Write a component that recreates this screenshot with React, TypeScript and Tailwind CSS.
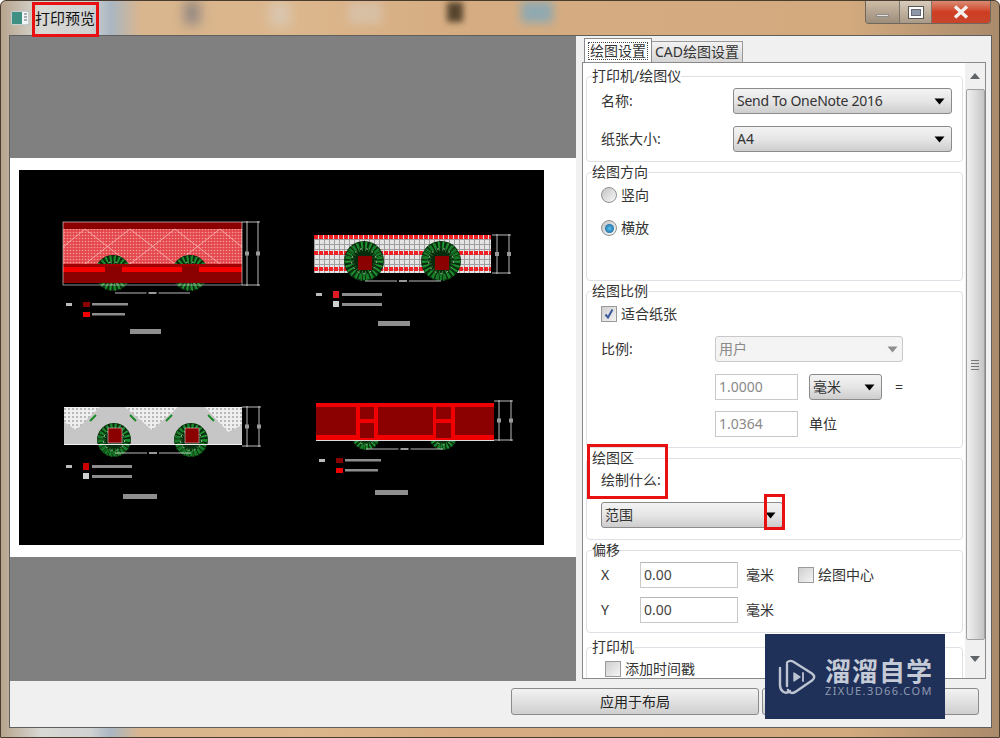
import type { ReactNode } from "react";

// 树的放射线条
function Tree({ cx, cy, r }: { cx: number; cy: number; r: number }) {
  const spokes = Array.from({ length: 22 }, (_, i) => (i / 22) * Math.PI * 2);
  return (
    <g fill="none">
      <circle cx={cx} cy={cy} r={r} fill="#0a2c0e" />
      <circle cx={cx} cy={cy} r={r * 0.8} stroke="#17802a" strokeWidth={r * 0.3} strokeDasharray="2 2" />
      <circle cx={cx} cy={cy} r={r * 0.62} strokeWidth="0.8" strokeDasharray="2 4" stroke="#dfeeda" />
      {spokes.map((a) => (
        <line
          key={a}
          x1={cx + Math.cos(a) * r * 0.5}
          y1={cy + Math.sin(a) * r * 0.5}
          x2={cx + Math.cos(a) * r}
          y2={cy + Math.sin(a) * r}
          stroke="#2aa838"
          strokeWidth="0.7"
        />
      ))}
    </g>
  );
}

function Dims({ x1, x2, y1, y2, a, b, ly }: { x1: number; x2: number; y1: number; y2: number; a: number; b: number; ly: number }) {
  const lx = (a + b) / 2;
  return (
    <g stroke="#e8e8e8" strokeWidth="0.8" fill="none">
      <path d={`M${x1} ${y1}V${y2}M${x2} ${y1}V${y2}M${x1 - 5} ${y1 + 1}H${x2 + 2}M${x1 - 5} ${y2 - 1}H${x2 + 2}`} />
      <path d={`M${a} ${ly}H${lx - 6}M${lx + 6} ${ly}H${b}`} />
      <path d={`M${lx - 4} ${ly}H${lx + 4}`} stroke="#999" strokeWidth="2" />
      <path d={`M${x1 - 2} ${(y1 + y2) / 2}h4M${x2 - 2} ${(y1 + y2) / 2}h4`} stroke="#999" strokeWidth="4" />
    </g>
  );
}

function Legend({ x, y, c1, c2, w }: { x: number; y: number; c1: string; c2: string; w: number }) {
  return (
    <g>
      <rect x={x - 17} y={y - 2} width="6" height="3" fill="#bbb" />
      <rect x={x} y={y - 3} width="7" height="5" fill={c1} />
      <rect x={x} y={y + 7} width="7" height="5" fill={c2} />
      <rect x={x + 9} y={y - 2} width={w} height="2.5" fill="#8d8d8d" />
      <rect x={x + 9} y={y + 8} width={w - 3} height="2.5" fill="#8d8d8d" />
    </g>
  );
}

function Drawing() {
  return (
    <svg viewBox="19 170 525 375" className="w-[525px] h-[375px] bg-black block blur-[0.5px]">
      <defs>
        <pattern id="pink" width="3" height="3" patternUnits="userSpaceOnUse">
          <rect width="3" height="3" fill="#e4484d" />
          <circle cx="1.5" cy="1.5" r="0.8" fill="#f59a9a" />
        </pattern>
        <pattern id="grid" width="4" height="4" patternUnits="userSpaceOnUse">
          <rect width="4" height="4" fill="#eeeeee" />
          <rect width="2" height="2" fill="#b9b9b9" />
        </pattern>
        <pattern id="redcells" width="5" height="16" patternUnits="userSpaceOnUse" x="314" y="235">
          <rect x="0" y="0" width="4" height="4" fill="#ee2026" />
        </pattern>
        <pattern id="dots" width="5" height="5" patternUnits="userSpaceOnUse">
          <rect width="5" height="5" fill="#9f9f9f" />
          <rect width="4" height="4" fill="#e4e4e4" />
        </pattern>
      </defs>

      {/* 左上 */}
      <rect x="63" y="222" width="179" height="7" fill="#8b0000" />
      <rect x="63" y="229" width="179" height="35" fill="url(#pink)" />
      <path d="M63 247L85 229L130 264M85 264L130 229L175 264M130 264L175 229L220 264M175 264L220 229L242 247" stroke="#f8b9b9" strokeWidth="0.8" fill="none" />
      <Tree cx={113} cy={273} r={18} />
      <Tree cx={190} cy={273} r={18} />
      <rect x="63" y="264" width="179" height="3" fill="#a00000" />
      <rect x="63" y="267" width="179" height="5" fill="#f50000" />
      <rect x="63" y="272" width="179" height="11" fill="#8b0000" />
      <rect x="105" y="266" width="17" height="16" fill="#8b0000" />
      <rect x="182" y="266" width="17" height="16" fill="#8b0000" />
      <rect x="63" y="222" width="179" height="63" fill="none" stroke="#eee" strokeWidth="0.6" />
      <Dims x1={247} x2={258} y1={221} y2={286} a={115} b={190} ly={293} />
      <Legend x={83} y={305} c1="#8b0000" c2="#f00000" w={36} />
      <rect x="130" y="329" width="31" height="5" fill="#8f8f8f" />

      {/* 右上 */}
      <rect x="314" y="235" width="177" height="38" fill="url(#dots)" />
      <rect x="314" y="235" width="177" height="38" fill="url(#redcells)" />
      <Tree cx={364} cy={261} r={20} />
      <Tree cx={441} cy={261} r={20} />
      <rect x="358" y="256" width="14" height="14" fill="#8b0000" />
      <rect x="435" y="256" width="14" height="14" fill="#8b0000" />
      <Dims x1={497} x2={509} y1={234} y2={274} a={365} b={441} ly={281} />
      <rect x="316" y="293" width="6" height="3" fill="#bbb" />
      <rect x="333" y="291" width="6" height="7" fill="#e01b22" />
      <rect x="333" y="301" width="6" height="6" fill="#cfcfcf" />
      <rect x="342" y="293" width="40" height="3" fill="#8d8d8d" />
      <rect x="342" y="303" width="40" height="3" fill="#8d8d8d" />
      <rect x="378" y="321" width="32" height="5" fill="#8f8f8f" />

      {/* 左下 */}
      <rect x="64" y="407" width="178" height="38" fill="#c6c6c6" />
      <path d="M64 407H100L76 430L64 422ZM125 407H178L152 430ZM205 407H242V425L228 432Z" fill="url(#grid)" />
      <Tree cx={114} cy={440} r={17} />
      <Tree cx={191} cy={440} r={17} />
      <path d="M96 415l-6 6M130 415l6 6M172 415l-6 6M208 415l6 6" stroke="#1d8a2a" strokeWidth="2" />
      <rect x="108" y="428" width="14" height="15" fill="#8b0000" stroke="#eee" strokeWidth="0.5" />
      <rect x="185" y="428" width="14" height="15" fill="#8b0000" stroke="#eee" strokeWidth="0.5" />
      <rect x="64" y="444" width="178" height="1" fill="#eee" />
      <Dims x1={247} x2={259} y1={406} y2={447} a={115} b={191} ly={453} />
      <rect x="66" y="465" width="6" height="3" fill="#bbb" />
      <rect x="83" y="463" width="6" height="7" fill="#c00" />
      <rect x="83" y="473" width="6" height="6" fill="#cfcfcf" />
      <rect x="92" y="465" width="40" height="3" fill="#8d8d8d" />
      <rect x="92" y="475" width="40" height="3" fill="#8d8d8d" />
      <rect x="123" y="494" width="34" height="5" fill="#8f8f8f" />

      {/* 右下 */}
      <Tree cx={366} cy={436} r={14} />
      <Tree cx={443} cy={436} r={14} />
      <rect x="316" y="403" width="178" height="37" fill="#f00000" />
      <rect x="316" y="407" width="40" height="28" fill="#8b0000" />
      <rect x="378" y="407" width="55" height="28" fill="#8b0000" />
      <rect x="455" y="407" width="39" height="28" fill="#8b0000" />
      <rect x="360" y="407" width="14" height="12" fill="#8b0000" />
      <rect x="360" y="423" width="14" height="15" fill="#8b0000" />
      <rect x="436" y="407" width="15" height="12" fill="#8b0000" />
      <rect x="436" y="423" width="15" height="15" fill="#8b0000" />
      <rect x="316" y="440" width="178" height="1" fill="#ddd" />
      <Dims x1={499} x2={511} y1={400} y2={441} a={366} b={443} ly={449} />
      <Legend x={336} y={461} c1="#8b0000" c2="#f00000" w={36} />
      <rect x="375" y="490" width="33" height="5" fill="#8f8f8f" />
    </svg>
  );
}

function Arrow({ muted }: { muted?: boolean }) {
  return (
    <svg width="11" height="7" viewBox="0 0 11 7" className="shrink-0">
      <path d="M0.5 0.5H10.5L5.5 6.5Z" fill={muted ? "#8e8e8e" : "#000"} />
    </svg>
  );
}

function Select({ value, className }: { value: string; className: string }) {
  return (
    <div className={`h-[26px] flex items-center justify-between pl-[3px] pr-[6px] rounded-[3px] border border-[#8b8b8b] bg-linear-to-b from-[#f3f3f3] via-[#e6e6e6] to-[#cdcdcd] text-[#333] ${className}`}>
      <span>{value}</span>
      <Arrow />
    </div>
  );
}

function Input({ value, muted }: { value: string; muted?: boolean }) {
  return (
    <div className={`h-[26px] flex items-center pl-[3px] border border-[#c9c9c9] bg-white ${muted ? "w-[83px] text-[#8a8a8a]" : "w-[98px] text-[#444] border-t-[#b5b5b5]"}`}>
      {value}
    </div>
  );
}

function Check({ checked }: { checked?: boolean }) {
  return (
    <span className="w-[16px] h-[16px] shrink-0 flex items-center justify-center border border-[#9a9a9a] bg-linear-to-br from-[#cfcfcf] to-[#f4f4f4]">
      {checked && (
        <svg width="12" height="12" viewBox="0 0 12 12">
          <path d="M2.5 6.5L5 9.5L9.5 1.5" stroke="#3a5a9c" strokeWidth="2" fill="none" />
        </svg>
      )}
    </span>
  );
}

function Radio({ checked }: { checked?: boolean }) {
  return (
    <span className="w-[16px] h-[16px] shrink-0 rounded-full flex items-center justify-center border border-[#8d9196] bg-linear-to-br from-[#c4c4c4] to-[#f8f8f8]">
      {checked && <span className="w-[9px] h-[9px] rounded-full bg-radial from-[#5cc0ee] to-[#0b5a92]" />}
    </span>
  );
}

function Group({ title, className, children }: { title: string; className: string; children: ReactNode }) {
  return (
    <fieldset className={`border border-[#dde1e5] rounded-[4px] pl-[14px] ${className}`}>
      <legend className="-ml-[9px] h-4 leading-4 text-[#333]">{title}</legend>
      {children}
    </fieldset>
  );
}

export default function App() {
  return (
    <div className="relative w-[1000px] h-[738px] overflow-hidden rounded-t-[6px] border border-[#4a3c2e] flex flex-col text-[14px] leading-4 text-[#333] font-['Noto_Sans','Noto_Sans_CJK_SC',sans-serif] bg-[linear-gradient(90deg,#b7a48c_0%,#d8d8d4_4%,#d0d2d2_9%,#a9b6c2_11%,#d9b68e_14%,#dcb68c_30%,#d6ad82_45%,#d4ab80_70%,#d2aa7e_85%,#a98a6b_100%)]">
      {/* 标题栏背景的模糊色块 */}
      <div className="absolute left-[183px] top-0 w-[16px] h-[24px] bg-[#77767f] opacity-70 blur-[6px]" />
      <div className="absolute left-[268px] top-0 w-[22px] h-[26px] bg-[#d9cdbc] opacity-70 blur-[6px]" />
      <div className="absolute left-[347px] top-[1px] w-[34px] h-[22px] bg-[#d8c6b2] opacity-70 blur-[4px]" />
      <div className="absolute left-[446px] top-[1px] w-[16px] h-[20px] bg-[#4a3a26] opacity-90 blur-[3px]" />
      <div className="absolute left-[520px] top-0 w-[32px] h-[22px] bg-[#7fa9bd] opacity-80 blur-[5px]" />

      {/* 标题栏 */}
      <div className="relative h-[34px] shrink-0 flex items-start">
        <svg width="18" height="14" viewBox="0 0 18 14" className="ml-[10px] mt-[10px] shrink-0">
          <rect width="18" height="14" fill="#f2f5f5" stroke="#9aa" />
          <rect x="1" y="1" width="10" height="12" fill="#3f8f83" />
          <path d="M13 3h3M13 6h3M13 9h3" stroke="#667" />
        </svg>
        <span className="ml-[6px] mt-[8px] text-[15px] leading-[18px] text-[#111]">打印预览</span>
        <div className="ml-auto mr-[8px] flex h-[23px] rounded-b-[4px] border border-t-0 border-[#6f675e] overflow-hidden">
          <div className="w-[33px] flex items-end justify-center pb-[6px] bg-linear-to-b from-[#cdbca6] to-[#9c8d7b]">
            <span className="w-[13px] h-[3px] bg-[#e8e2da] border border-[#8c8c8c]" />
          </div>
          <div className="w-[33px] flex items-center justify-center border-x border-[#7d746a] bg-linear-to-b from-[#d8cbb9] to-[#a99a87]">
            <span className="w-[16px] h-[13px] border border-[#555] bg-white p-[2px]">
              <span className="block w-full h-full bg-[#8d97a8] border border-[#667]" />
            </span>
          </div>
          <div className="w-[58px] flex items-center justify-center bg-linear-to-b from-[#d98a72] via-[#cf3d22] to-[#c8452b]">
            <svg width="16" height="14" viewBox="0 0 16 14">
              <path d="M2 1.5L14 12.5M14 1.5L2 12.5" stroke="#f2f0ec" strokeWidth="3.4" />
            </svg>
          </div>
        </div>
      </div>

      {/* 主体 */}
      <div className="relative flex-1 min-h-0 ml-[8px] mr-[7px] mb-[9px] border border-[#5f5f5f] bg-[#f0f0f0] flex flex-col">
        <div className="flex h-[645px] shrink-0">
          {/* 预览 */}
          <div className="w-[566px] bg-[#808080] pt-[122px]">
            <div className="h-[399px] bg-white pl-[9px] pt-[12px]">
              <Drawing />
            </div>
          </div>

          {/* 设置 */}
          <div className="ml-[6px] w-[404px] pt-[2px] flex flex-col">
            <div className="flex items-end h-[24px] pl-[2px]">
              <div className="w-[68px] h-[24px] flex items-center justify-center bg-white border border-b-0 border-[#8a8a8a]">
                <span className="border border-dotted border-[#444] px-[1px]">绘图设置</span>
              </div>
              <div className="w-[91px] h-[21px] flex items-center justify-center border border-b-0 border-l-0 border-[#9a9a9a] bg-linear-to-b from-[#f2f2f2] to-[#d5d5d5]">
                CAD绘图设置
              </div>
            </div>
            <div className="h-[617px] bg-white border border-[#8a8a8a] flex overflow-hidden">
              <div className="w-[382px] pl-[3px] pr-[2px] pt-[5px] flex flex-col gap-[2px] overflow-hidden">
                <Group title="打印机/绘图仪" className="h-[94px] shrink-0">
                  <div className="flex flex-col gap-[12px] pt-[4px]">
                    <div className="flex items-center">
                      <span className="w-[132px]">名称:</span>
                      <Select value="Send To OneNote 2016" className="w-[219px] tracking-[-0.25px]" />
                    </div>
                    <div className="flex items-center">
                      <span className="w-[132px]">纸张大小:</span>
                      <Select value="A4" className="w-[219px]" />
                    </div>
                  </div>
                </Group>

                <Group title="绘图方向" className="h-[117px] shrink-0">
                  <div className="flex flex-col gap-[17px] pt-[7px]">
                    <div className="flex items-center gap-[4px]"><Radio />竖向</div>
                    <div className="flex items-center gap-[4px]"><Radio checked />横放</div>
                  </div>
                </Group>

                <Group title="绘图比例" className="h-[165px] shrink-0">
                  <div className="pt-[7px] flex items-center gap-[4px]"><Check checked />适合纸张</div>
                  <div className="mt-[14px] flex items-center">
                    <span className="w-[114px]">比例:</span>
                    <div className="w-[188px] h-[26px] flex items-center justify-between pl-[3px] pr-[4px] rounded-[3px] border border-[#c9c9c9] bg-[#f4f4f4] text-[#8a8a8a]">
                      <span>用户</span>
                      <Arrow muted />
                    </div>
                  </div>
                  <div className="mt-[12px] ml-[114px] flex items-center">
                    <Input value="1.0000" muted />
                    <Select value="毫米" className="w-[73px] ml-[11px]" />
                    <span className="ml-[13px]">=</span>
                  </div>
                  <div className="mt-[11px] ml-[114px] flex items-center">
                    <Input value="1.0364" muted />
                    <span className="ml-[11px]">单位</span>
                  </div>
                </Group>

                <Group title="绘图区" className="h-[90px] shrink-0">
                  <div className="pt-[6px]">绘制什么:</div>
                  <Select value="范围" className="mt-[14px] w-[182px]" />
                </Group>

                <Group title="偏移" className="h-[91px] shrink-0">
                  <div className="pt-[4px] flex items-center">
                    <span className="w-[39px]">X</span>
                    <Input value="0.00" />
                    <span className="ml-[8px] w-[52px]">毫米</span>
                    <Check />
                    <span className="ml-[4px]">绘图中心</span>
                  </div>
                  <div className="mt-[9px] flex items-center">
                    <span className="w-[39px]">Y</span>
                    <Input value="0.00" />
                    <span className="ml-[8px]">毫米</span>
                  </div>
                </Group>

                <Group title="打印机" className="h-[60px] shrink-0 mt-[4px]">
                  <div className="pl-[4px] pt-[6px] flex items-center gap-[4px]"><Check />添加时间戳</div>
                </Group>
              </div>

              {/* 滚动条 */}
              <div className="w-[20px] bg-[#f0f0f0] flex flex-col items-center">
                <div className="h-[26px] flex items-center justify-center">
                  <svg width="10" height="6" viewBox="0 0 10 6"><path d="M0 6L5 0L10 6Z" fill="#5f6468" /></svg>
                </div>
                <div className="w-[19px] h-[553px] rounded-[2px] border border-[#a0a0a0] bg-linear-to-r from-[#f0f0f0] via-[#dcdcdc] to-[#c4c4c4] flex flex-col items-center justify-center gap-[2px]">
                  <span className="w-[8px] h-px bg-[#777]" />
                  <span className="w-[8px] h-px bg-[#777]" />
                  <span className="w-[8px] h-px bg-[#777]" />
                  <span className="w-[8px] h-px bg-[#777]" />
                </div>
                <div className="h-[38px] flex items-center justify-center">
                  <svg width="10" height="6" viewBox="0 0 10 6"><path d="M0 0L5 6L10 0Z" fill="#5f6468" /></svg>
                </div>
              </div>
            </div>
          </div>
        </div>

        {/* 底部按钮 */}
        <div className="flex-1 flex justify-end gap-[3px] pt-[7px] pr-[12px]">
          <button className="w-[248px] h-[27px] rounded-[3px] border border-[#8b8b8b] bg-linear-to-b from-[#f3f3f3] to-[#cfcfcf] text-[#222]">应用于布局</button>
          <div className="w-[217px] h-[27px] rounded-[3px] border border-[#8b8b8b] bg-linear-to-b from-[#f3f3f3] to-[#cfcfcf]" />
        </div>
      </div>

      {/* 红色标记 */}
      <div className="absolute left-[31px] top-[1px] w-[67px] h-[35px] border-[3px] border-[#e81010]" />
      <div className="absolute left-[586px] top-[443px] w-[81px] h-[55px] border-[3px] border-[#e81010]" />
      <div className="absolute left-[763px] top-[493px] w-[21px] h-[36px] border-[3px] border-[#e81010]" />

      {/* 水印 */}
      <div className="absolute left-[764px] top-[633px] w-[180px] h-[85px] bg-[#1f3158] flex items-center pl-[12px]">
        <svg width="40" height="38" viewBox="0 0 40 38" fill="none" stroke="#bcc3d1" strokeWidth="2.4" strokeLinecap="round" strokeLinejoin="round">
          <path d="M10 4.5C12 2.5 14 2.5 16 3.5L35 15.5C38 18 38 20 35 22.5L19 33.5C16 36 12 35 11 32" />
          <path d="M3 10V27C3 33 8 37 13 33" />
          <path d="M10 6V28" />
          <path d="M17 15V23L23 19Z" fill="#bcc3d1" strokeWidth="1.4" />
          <path d="M26 15V23" strokeWidth="1.8" />
        </svg>
        <div className="ml-[8px] flex flex-col items-start">
          <span className="text-[26px] leading-[28px] font-bold tracking-[1px] text-[#c5cbd6]">溜溜自学</span>
          <span className="text-[11px] leading-[12px] tracking-[1.4px] text-[#8f9ab0]">ZIXUE.3D66.COM</span>
        </div>
      </div>
    </div>
  );
}
